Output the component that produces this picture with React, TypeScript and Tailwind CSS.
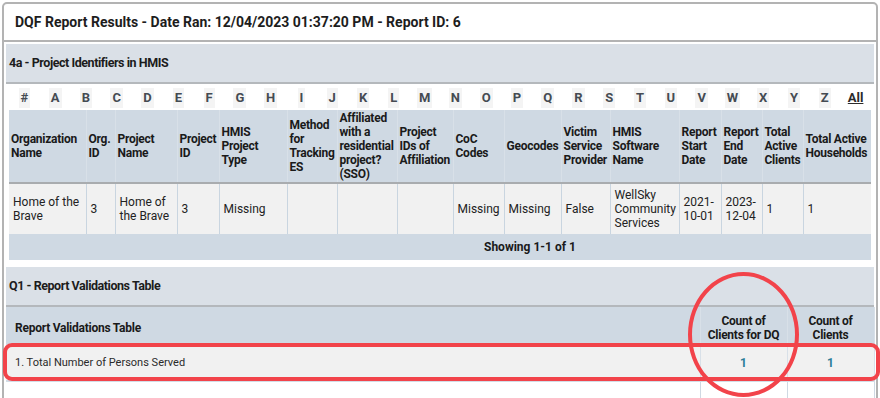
import React from 'react';

const letters = ['#', 'A', 'B', 'C', 'D', 'E', 'F', 'G', 'H', 'I', 'J', 'K', 'L', 'M', 'N', 'O', 'P', 'Q', 'R', 'S', 'T', 'U', 'V', 'W', 'X', 'Y', 'Z'];

const cols: { label: string; width: number; value: string }[] = [
  { label: 'Organization Name', width: 77, value: 'Home of the Brave' },
  { label: 'Org. ID', width: 29, value: '3' },
  { label: 'Project Name', width: 62, value: 'Home of the Brave' },
  { label: 'Project ID', width: 42, value: '3' },
  { label: 'HMIS Project Type', width: 68, value: 'Missing' },
  { label: 'Method for Tracking ES', width: 50, value: '' },
  { label: 'Affiliated with a residential project? (SSO)', width: 60, value: '' },
  { label: 'Project IDs of Affiliation', width: 56, value: '' },
  { label: 'CoC Codes', width: 51, value: 'Missing' },
  { label: 'Geocodes', width: 57, value: 'Missing' },
  { label: 'Victim Service Provider', width: 49, value: 'False' },
  { label: 'HMIS Software Name', width: 69, value: 'WellSky Community Services' },
  { label: 'Report Start Date', width: 42, value: '2021-10-01' },
  { label: 'Report End Date', width: 41, value: '2023-12-04' },
  { label: 'Total Active Clients', width: 41, value: '1' },
  { label: 'Total Active Households', width: 68, value: '1' },
];

function SectionHeader({ title }: { title: string }) {
  return (
    <div className="h-10 flex items-center px-[3px] bg-[#dae0e7] border-b-2 border-[#b4b8bc] text-[12.5px] font-bold text-[#1c1c1c] tracking-[-0.45px]">
      {title}
    </div>
  );
}

export default function App() {
  return (
    <div className="relative h-[398px] w-[880px] overflow-hidden bg-white font-['Roboto',sans-serif] text-[#222]">
      <div className="mt-[2px] mx-[2px] h-[420px] border-2 border-[#b3b3b3] rounded-t-[5px] bg-white">
        {/* title bar */}
        <div className="h-[38px] flex items-center pl-[11px] border-b-2 border-[#b3b3b3] text-[14px] font-bold text-[#1d1d1d]">
          DQF Report Results - Date Ran: 12/04/2023 01:37:20 PM - Report ID: 6
        </div>

        <div className="px-[2px] pt-[2px]">
          {/* 4a */}
          <SectionHeader title="4a - Project Identifiers in HMIS" />
          <div className="px-[3px]">
            <div className="grid grid-cols-[repeat(28,minmax(0,1fr))] h-[26px] pt-[2px] items-center text-[13px] font-bold text-[#454b52]">
              {letters.map((l) => (
                <div key={l} className="flex justify-center">
                  <span className="bg-[#f4f4f4] px-[2px] leading-[20px]">{l}</span>
                </div>
              ))}
              <div className="flex justify-center">
                <span className="underline text-[#2b2b2b] leading-[20px]">All</span>
              </div>
            </div>

            <table className="table-fixed border-collapse w-[862px] text-[12px] leading-[14px]">
              <colgroup>
                {cols.map((c) => (
                  <col key={c.label} style={{ width: c.width }} />
                ))}
              </colgroup>
              <thead>
                <tr className="bg-[#cfd9e3] h-[72px] border-b-2 border-[#a9acaf]">
                  {cols.map((c, i) => (
                    <th
                      key={c.label}
                      className={`text-left align-middle font-bold text-[#1a1a1a] px-[2px] py-[1px] tracking-[-0.25px] ${i < cols.length - 1 ? 'border-r border-[#d8e0e8]' : ''}`}
                    >
                      {c.label}
                    </th>
                  ))}
                </tr>
              </thead>
              <tbody>
                <tr className="bg-[#f1f1f1] h-[50px]">
                  {cols.map((c, i) => (
                    <td
                      key={c.label}
                      className={`align-middle text-[#222] px-[4px] py-[4px] ${i < cols.length - 1 ? 'border-r border-[#c9d5e0]' : ''}`}
                    >
                      {c.value}
                    </td>
                  ))}
                </tr>
                <tr className="bg-[#cfd9e3] h-[26px]">
                  <td colSpan={cols.length} className="pl-[475px] font-bold text-[12px] text-[#1a1a1a]">
                    Showing 1-1 of 1
                  </td>
                </tr>
              </tbody>
            </table>
          </div>

          {/* Q1 */}
          <div className="mt-[7px]">
            <SectionHeader title="Q1 - Report Validations Table" />
            <table className="table-fixed border-collapse w-[868px] text-[12px]">
              <colgroup>
                <col style={{ width: 694 }} />
                <col style={{ width: 87 }} />
                <col style={{ width: 87 }} />
              </colgroup>
              <thead>
                <tr className="bg-[#cfd9e3] h-[38px]">
                  <th className="text-left font-bold pl-[9px] pt-[4px] text-[#1a1a1a] tracking-[-0.25px] border-r border-[#d8e0e8]">
                    Report Validations Table
                  </th>
                  <th className="text-center font-bold leading-[14px] pt-[4px] text-[#1a1a1a] tracking-[-0.25px] border-r border-[#d8e0e8]">
                    Count of
                    <br />
                    Clients for DQ
                  </th>
                  <th className="text-center font-bold leading-[14px] pt-[4px] text-[#1a1a1a] tracking-[-0.25px] border-r border-[#d8e0e8]">
                    Count of
                    <br />
                    Clients
                  </th>
                </tr>
              </thead>
              <tbody>
                <tr className="bg-[#f1f1f1] h-[36px] border-b-2 border-[#d3dde6]">
                  <td className="pl-[9px] pt-[1px] text-[11px] text-[#2a2a2a] border-r border-[#d8e0e8]">
                    1. Total Number of Persons Served
                  </td>
                  <td className="text-center text-[#2b7d98] font-bold border-r border-[#d8e0e8]">1</td>
                  <td className="text-center text-[#2b7d98] font-bold border-r border-[#d8e0e8]">1</td>
                </tr>
                <tr className="h-[30px]">
                  <td className="border-r border-[#cfd9e3]" />
                  <td className="border-r border-[#cfd9e3]" />
                  <td className="border-r border-[#cfd9e3]" />
                </tr>
              </tbody>
            </table>
          </div>
        </div>
      </div>

      {/* red annotations */}
      <div className="absolute left-[3px] top-[343px] w-[877px] h-[38px] border-4 border-[#f2434a] rounded-[9px]" />
      <div className="absolute left-[688px] top-[272px] w-[111px] h-[125px] border-4 border-[#f2434a] rounded-[50%]" />
    </div>
  );
}
